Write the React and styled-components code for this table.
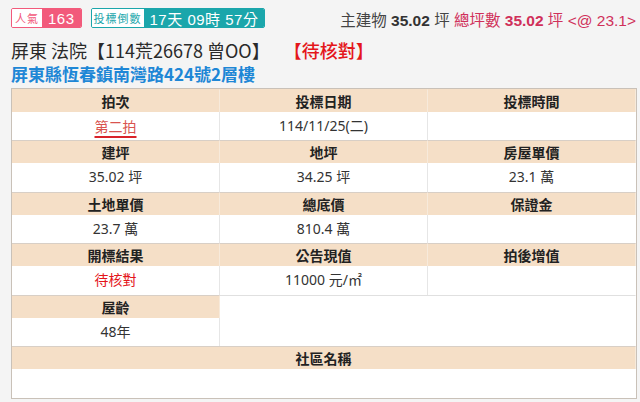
import React from 'react';
import styled, { createGlobalStyle } from 'styled-components';

const GlobalStyle = createGlobalStyle`
  html, body {
    margin: 0;
    padding: 0;
    background: #f4f4f4;
  }
  body {
    font-family: "Noto Sans", "Noto Sans CJK TC", sans-serif;
    color: #333;
  }
`;

const Page = styled.div`
  padding: 8px 4px 0 11px;
  width: 640px;
  height: 402px;
  box-sizing: border-box;
  overflow: hidden;
`;

const TopBar = styled.div`
  display: flex;
  align-items: center;
  height: 20px;
`;

const BadgeGroup = styled.div`
  display: flex;
  height: 20px;
  margin-right: 9px;
  border-radius: 2px;
  overflow: hidden;
  border: 1px solid ${p => p.color};
  box-sizing: border-box;
`;

const BadgeLabel = styled.span`
  display: flex;
  align-items: center;
  padding: 0 ${p => p.pad || 3}px;
  background: #fff;
  color: ${p => p.color};
  font-family: "Noto Sans CJK TC", sans-serif;
  font-size: 11px;
  letter-spacing: 1px;
`;

const BadgeValue = styled.span`
  display: flex;
  align-items: center;
  padding: 0 ${p => p.pad || 8}px;
  background: ${p => p.color};
  color: #fff;
  font-family: "Liberation Sans", "Noto Sans CJK TC", sans-serif;
  font-size: 15px;
  letter-spacing: 0.5px;
`;

const AreaInfo = styled.div`
  margin-left: auto;
  font-family: "Liberation Sans", "Noto Sans CJK TC", sans-serif;
  font-size: 15.5px;
  color: #444;
  white-space: nowrap;
  padding-top: 2px;
`;

const Num = styled.span`
  color: ${p => p.color || '#333'};
  font-weight: ${p => (p.bold ? 600 : 400)};
`;

const Pink = styled.span`
  color: #d0305a;
`;

const TitleRow = styled.div`
  display: flex;
  align-items: baseline;
  margin-top: 11px;
  font-family: "Noto Sans CJK TC", sans-serif;
  font-size: 18px;
  line-height: 22px;
  color: #2a2a2a;
`;

const Status = styled.span`
  margin-left: 14px;
  color: #e4161b;
  font-weight: 500;
`;

const Address = styled.div`
  margin-top: 2px;
  font-family: "Noto Sans CJK TC", sans-serif;
  font-size: 17px;
  line-height: 22px;
  font-weight: 700;
  color: #1e87d6;
`;

const Table = styled.div`
  display: grid;
  grid-template-columns: repeat(3, 1fr);
  grid-auto-rows: auto;
  margin-top: 3px;
  width: 626px;
  border: 1px solid #c9c1b8;
  box-sizing: border-box;
  background: #fff;
  font-family: "Noto Sans", "Noto Sans CJK TC", sans-serif;
  font-size: 14px;
`;

const Head = styled.div`
  grid-column: span ${p => p.span || 1};
  height: 22px;
  line-height: 22px;
  text-align: center;
  background: #f5dfc7;
  font-weight: 700;
  font-family: "Noto Sans CJK TC", sans-serif;
  color: #222;
  border-top: 1px solid ${p => (p.first ? 'transparent' : '#d8cfc6')};
  border-right: 1px solid #f7eadb;
`;

const Cell = styled.div`
  grid-column: span ${p => p.span || 1};
  grid-row: span ${p => p.rows || 1};
  height: ${p => (p.rows === 2 ? 'auto' : p.tall ? '29px' : '28.4px')};
  line-height: 28px;
  text-align: center;
  color: ${p => p.color || '#333'};
  border-right: 1px solid ${p => (p.last ? 'transparent' : '#e6e6e6')};
  border-top: ${p => (p.topLine ? '1px solid #e0e0e0' : 'none')};
`;

const RoundLink = styled.a`
  color: #d9534f;
  text-decoration: underline;
  text-decoration-color: #d9232a;
  text-underline-offset: 4px;
  text-decoration-thickness: 2px;
  font-family: "Noto Sans CJK TC", sans-serif;
`;

const rows = [
  {
    heads: ['拍次', '投標日期', '投標時間'],
    cells: [<RoundLink key="r">第二拍</RoundLink>, '114/11/25(二)', ''],
  },
  { heads: ['建坪', '地坪', '房屋單價'], cells: ['35.02 坪', '34.25 坪', '23.1 萬'] },
  { heads: ['土地單價', '總底價', '保證金'], cells: ['23.7 萬', '810.4 萬', ''] },
  { heads: ['開標結果', '公告現值', '拍後增值'], cells: ['待核對', '11000 元/㎡', ''] },
];

export default function App() {
  return (
    <Page>
      <GlobalStyle />
      <TopBar>
        <BadgeGroup color="#f25a7b">
          <BadgeLabel color="#f25a7b">人氣</BadgeLabel>
          <BadgeValue color="#f25a7b" pad={6}>163</BadgeValue>
        </BadgeGroup>
        <BadgeGroup color="#1ba6ab">
          <BadgeLabel color="#1ba6ab" pad={2}>投標倒數</BadgeLabel>
          <BadgeValue color="#1ba6ab" pad={6}>17天 09時 57分</BadgeValue>
        </BadgeGroup>
        <AreaInfo>
          主建物 <Num bold>35.02</Num> 坪 <Pink>總坪數 <Num bold color="#d0305a">35.02</Num> 坪 &lt;@ 23.1&gt;</Pink>
        </AreaInfo>
      </TopBar>

      <TitleRow>
        屏東 法院【114荒26678 曾OO】
        <Status>【待核對】</Status>
      </TitleRow>
      <Address>屏東縣恆春鎮南灣路424號2層樓</Address>

      <Table>
        {rows.map((r, i) => (
          <React.Fragment key={i}>
            {r.heads.map((h, j) => (
              <Head key={'h' + j} first={i === 0}>{h}</Head>
            ))}
            {r.cells.map((c, j) => (
              <Cell key={'c' + j} last={j === 2} color={i === 3 && j === 0 ? '#e4161b' : undefined}>
                {c}
              </Cell>
            ))}
          </React.Fragment>
        ))}
        <Head>屋齡</Head>
        <Cell span={2} rows={2} last topLine />
        <Cell>48年</Cell>
        <Head span={3}>社區名稱</Head>
        <Cell span={3} last tall />
      </Table>
    </Page>
  );
}
